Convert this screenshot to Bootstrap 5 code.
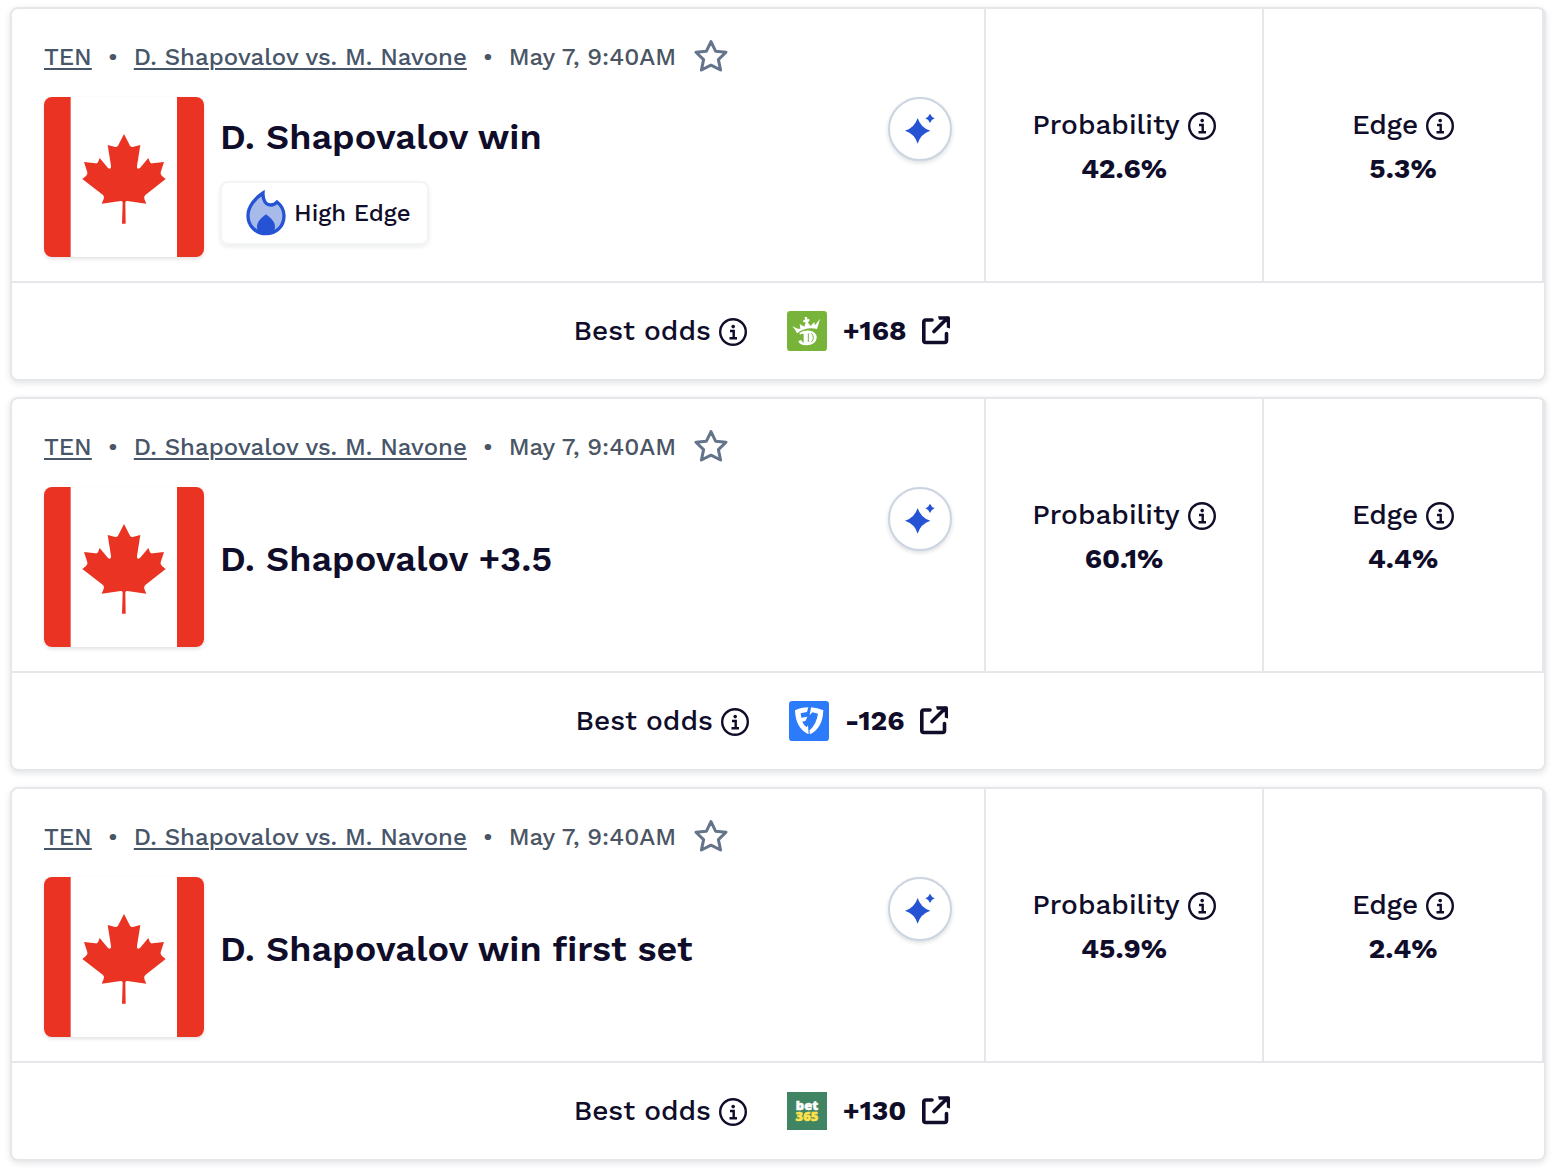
<!DOCTYPE html>
<html lang="en">
<head>
<meta charset="utf-8">
<meta name="viewport" content="width=device-width, initial-scale=1">
<title>Tennis picks</title>
<link href="https://cdn.jsdelivr.net/npm/bootstrap@5.3.0/dist/css/bootstrap.min.css" rel="stylesheet">
<style>
  body { font-family: "Work Sans", Inter, "Liberation Sans", sans-serif; color: #0f0d29; background: #fff; font-weight: 500; }
  .picks { padding: 7px 6px 7px 10px; gap: 16px; }
  .pick { --bs-card-border-color: #e5e7eb; --bs-card-border-width: 2px; --bs-card-border-radius: 8px; --bs-card-color: #0f0d29; box-shadow: 0 2px 6px rgba(15, 23, 42, .12); }
  .pick-main { padding: 24px 32px; min-width: 0; }
  .meta { height: 48px; margin-bottom: 16px; font-size: 24px; line-height: 48px; color: #4b5563; white-space: nowrap; }
  .meta a { color: #475569; text-decoration-thickness: 2px; text-underline-offset: 3px; }
  .dot { width: 42px; text-align: center; }
  .star { margin-left: 18px; margin-bottom: 2px; }
  .plain { padding: 0; border: 0; background: none; color: inherit; display: inline-flex; }
  .star.plain { color: #64748b; }
  .flag { border-radius: 8px; overflow: hidden; box-shadow: 0 2px 4px rgba(0, 0, 0, .12); }
  .pick-text { padding-bottom: 12px; }
  .pick-title { font-size: 36px; line-height: 48px; font-weight: 600; padding-bottom: 4px; }
  .edge-tag { height: 64px; padding: 0 16px 0 24px; gap: 8px; border: 2px solid #f3f4f6; border-radius: 8px; font-size: 24px; box-shadow: 0 2px 4px rgba(15, 23, 42, .08); }
  .insight { width: 64px; height: 64px; border: 2px solid #cbd5e1; border-radius: 50%; background: #fff; box-shadow: 0 2px 4px rgba(15, 23, 42, .14); }
  .stat { flex: 0 0 278px; padding-top: 4px; border-left: 2px solid #e5e7eb; font-size: 28px; line-height: 44px; }
  .stat:last-child { flex-basis: 282px; border-right: 2px solid #e5e7eb; }
  .stat strong, .odds { font-weight: 700; }
  .label-row { gap: 8px; }
  .label-row .plain { padding-top: 2px; }
  .pick-foot { height: 98px; padding-right: 32px; gap: 40px; border-top: 2px solid #e5e7eb; font-size: 28px; line-height: 44px; }
  .odds { gap: 16px; color: inherit; }
  .brand-word { font-family: "Open Sans", sans-serif; font-weight: 800; font-size: 13px; text-anchor: middle; stroke: currentColor; stroke-width: .5px; fill: currentColor; }
  .brand-white { color: #fff; }
  .brand-yellow { color: #ffe14a; }
</style>
<script src="https://cdn.jsdelivr.net/npm/bootstrap@5.3.0/dist/js/bootstrap.bundle.min.js"></script>
</head>
<body>
<svg width="0" height="0" class="position-absolute" aria-hidden="true">
  <symbol id="i-star" viewBox="0 0 34 34"><path d="M17 2.6 21.7 12.3 32 13.2 24.4 20.6 26.6 31 17 26.2 7.400 31 9.600 20.600 2 13.200 12.300 12.300Z" fill="none" stroke="currentColor" stroke-width="3" stroke-linejoin="round"/></symbol>
  <symbol id="i-info" viewBox="0 0 28 28"><circle cx="14" cy="14" r="12.8" fill="none" stroke="currentColor" stroke-width="2.400"/><circle cx="14.200" cy="8.600" r="1.800" fill="currentColor"/><path d="M11 13H14.700V20M10.500 20.200H18" fill="none" stroke="currentColor" stroke-width="2.400"/></symbol>
  <symbol id="i-ext" viewBox="1.500 0 28 30"><path d="M11.500 4H5.300Q3.300 4 3.300 6V24.500Q3.300 26.500 5.300 26.500H24Q26 26.500 26 24.500V17.500" fill="none" stroke="currentColor" stroke-width="3.600" stroke-linecap="round"/><path d="M13.500 15.500 26.500 2.500" stroke="currentColor" stroke-width="3.600" stroke-linecap="round"/><path d="M17.500 .3H28Q29.500 .3 29.500 2V12.500L26.300 11.500V6.500L23.500 3.700H18.500Z" fill="currentColor"/></symbol>
  <symbol id="i-spark" viewBox="30 27 180 180"><path d="M113 84Q122 113 151 122.500 122 132 113 161 104 132 75 122.500 104 113 113 84ZM150 71Q154 81 164 85 154 89 150 99 146 89 136 85 146 81 150 71Z" fill="#2553d4"/></symbol>
  <symbol id="i-flame" viewBox="78 44 120 138"><path d="M129 53C128 78 139 89 152 89 161 89 167 85 171 80 185 91 192 106 192 121 192 154 168 175 138 175 108 175 84 152 84 121 84 94 106 68 129 53Z" fill="#a8baea" stroke="#2553d4" stroke-width="10"/><path d="M138 117C154 130 165 140 165 154Q165 163 161 170 138 182 115 170 111 163 111 154C111 140 122 130 138 117Z" fill="#2553d4"/></symbol>
  <symbol id="i-canada" viewBox="0 0 480 480"><path d="M0 0H480V480H0Z" fill="#fff"/><path d="M0 0H80V480H0ZM399 0H480V480H399Z" fill="#ea3323"/><path d="M240 111 222 146Q218 152 211 149L191 144 201 207Q202 219 192 213L167 183 162 196Q160 200 154 199L120 195 130 226Q132 233 126 237L115 246 177 294Q182 299 179 306L173 320 230 312Q236 311 236 317L234 380H245L244 317Q244 311 250 312L307 320 301 306Q299 299 304 294L365 246 354 237Q348 233 350 226L360 195 326 199Q320 200 318 196L313 183 288 213Q277 219 279 207L289 144 269 149Q262 152 258 146Z" fill="#ea3323"/></symbol>
</svg>

<main class="picks d-flex flex-column">

  <article class="card pick">
    <div class="d-flex">
      <div class="pick-main flex-fill">
        <div class="meta d-flex align-items-center">
          <a href="#ten">TEN</a><span class="dot">•</span><a href="#match">D. Shapovalov vs. M. Navone</a><span class="dot">•</span><span>May 7, 9:40AM</span>
          <button type="button" class="plain star" aria-label="Save pick"><svg width="34" height="34"><use href="#i-star"/></svg></button>
        </div>
        <div class="d-flex gap-3">
          <svg class="flag flex-shrink-0" width="160" height="160" role="img" aria-label="Canada"><use href="#i-canada"/></svg>
          <div class="pick-text d-flex flex-column flex-fill align-items-start">
            <div class="flex-fill d-flex align-items-center"><h2 class="pick-title m-0">D. Shapovalov win</h2></div>
            <div class="edge-tag d-flex align-items-center"><svg width="40" height="46"><use href="#i-flame"/></svg><span>High Edge</span></div>
          </div>
          <button type="button" class="insight plain flex-shrink-0" aria-label="Insights"><svg width="60" height="60"><use href="#i-spark"/></svg></button>
        </div>
      </div>
      <div class="stat d-flex flex-column align-items-center justify-content-center">
        <div class="label-row d-flex align-items-center"><span>Probability</span><button type="button" class="plain" aria-label="About probability"><svg width="28" height="28"><use href="#i-info"/></svg></button></div>
        <strong>42.6%</strong>
      </div>
      <div class="stat d-flex flex-column align-items-center justify-content-center">
        <div class="label-row d-flex align-items-center"><span>Edge</span><button type="button" class="plain" aria-label="About edge"><svg width="28" height="28"><use href="#i-info"/></svg></button></div>
        <strong>5.3%</strong>
      </div>
    </div>
    <div class="pick-foot d-flex align-items-center justify-content-center">
      <div class="label-row d-flex align-items-center"><span>Best odds</span><button type="button" class="plain" aria-label="About best odds"><svg width="28" height="28"><use href="#i-info"/></svg></button></div>
      <a href="#draftkings" class="odds d-flex align-items-center text-decoration-none">
        <svg width="40" height="40" viewBox="0 0 120 120" role="img" aria-label="DraftKings"><rect width="120" height="120" rx="10" fill="#79b43a"/><path d="M30 67 25 57 16 46 32 53 40 53 38 39 52 47 56 35 48 32 50 26 54 27 53 18H60L61 25 67 24V31L62 34 71 45 82 33 84 43 99 23 95 38 90 54Q58 46 30 67Z" fill="#fff"/><path d="M37 66Q50 57 70 59 90 64 89 81 87 102 58 103 38 103 34 90L43 87Q45 93 50 95V69Q43 67 39 71Z" fill="#fff"/><path d="M64 67V93M73 67Q79 72 79 80 79 88 73 93" stroke="#79b43a" stroke-width="3" fill="none"/></svg>
        <span>+168</span>
        <svg width="28" height="30"><use href="#i-ext"/></svg>
      </a>
    </div>
  </article>

  <article class="card pick">
    <div class="d-flex">
      <div class="pick-main flex-fill">
        <div class="meta d-flex align-items-center">
          <a href="#ten">TEN</a><span class="dot">•</span><a href="#match">D. Shapovalov vs. M. Navone</a><span class="dot">•</span><span>May 7, 9:40AM</span>
          <button type="button" class="plain star" aria-label="Save pick"><svg width="34" height="34"><use href="#i-star"/></svg></button>
        </div>
        <div class="d-flex gap-3">
          <svg class="flag flex-shrink-0" width="160" height="160" role="img" aria-label="Canada"><use href="#i-canada"/></svg>
          <div class="pick-text d-flex flex-column flex-fill align-items-start">
            <div class="flex-fill d-flex align-items-center"><h2 class="pick-title m-0">D. Shapovalov +3.5</h2></div>
          </div>
          <button type="button" class="insight plain flex-shrink-0" aria-label="Insights"><svg width="60" height="60"><use href="#i-spark"/></svg></button>
        </div>
      </div>
      <div class="stat d-flex flex-column align-items-center justify-content-center">
        <div class="label-row d-flex align-items-center"><span>Probability</span><button type="button" class="plain" aria-label="About probability"><svg width="28" height="28"><use href="#i-info"/></svg></button></div>
        <strong>60.1%</strong>
      </div>
      <div class="stat d-flex flex-column align-items-center justify-content-center">
        <div class="label-row d-flex align-items-center"><span>Edge</span><button type="button" class="plain" aria-label="About edge"><svg width="28" height="28"><use href="#i-info"/></svg></button></div>
        <strong>4.4%</strong>
      </div>
    </div>
    <div class="pick-foot d-flex align-items-center justify-content-center">
      <div class="label-row d-flex align-items-center"><span>Best odds</span><button type="button" class="plain" aria-label="About best odds"><svg width="28" height="28"><use href="#i-info"/></svg></button></div>
      <a href="#fanduel" class="odds d-flex align-items-center text-decoration-none">
        <svg width="40" height="40" viewBox="27 33 120 120" role="img" aria-label="FanDuel"><rect x="27" y="33" width="120" height="120" rx="10" fill="#2b7bfa"/><path d="M45 61Q62 52 85 52L81 66 62 70 64 83 82 80 77 92 67 95Q71 105 80 112L84 106 86 133Q66 124 56 106 46 88 45 61ZM93 52Q112 53 130 61 129 88 119 106 109 124 90 133L88 122Q99 112 106 98 112 84 114 71L97 67 89 76Z" fill="#fff"/></svg>
        <span>-126</span>
        <svg width="28" height="30"><use href="#i-ext"/></svg>
      </a>
    </div>
  </article>

  <article class="card pick">
    <div class="d-flex">
      <div class="pick-main flex-fill">
        <div class="meta d-flex align-items-center">
          <a href="#ten">TEN</a><span class="dot">•</span><a href="#match">D. Shapovalov vs. M. Navone</a><span class="dot">•</span><span>May 7, 9:40AM</span>
          <button type="button" class="plain star" aria-label="Save pick"><svg width="34" height="34"><use href="#i-star"/></svg></button>
        </div>
        <div class="d-flex gap-3">
          <svg class="flag flex-shrink-0" width="160" height="160" role="img" aria-label="Canada"><use href="#i-canada"/></svg>
          <div class="pick-text d-flex flex-column flex-fill align-items-start">
            <div class="flex-fill d-flex align-items-center"><h2 class="pick-title m-0">D. Shapovalov win first set</h2></div>
          </div>
          <button type="button" class="insight plain flex-shrink-0" aria-label="Insights"><svg width="60" height="60"><use href="#i-spark"/></svg></button>
        </div>
      </div>
      <div class="stat d-flex flex-column align-items-center justify-content-center">
        <div class="label-row d-flex align-items-center"><span>Probability</span><button type="button" class="plain" aria-label="About probability"><svg width="28" height="28"><use href="#i-info"/></svg></button></div>
        <strong>45.9%</strong>
      </div>
      <div class="stat d-flex flex-column align-items-center justify-content-center">
        <div class="label-row d-flex align-items-center"><span>Edge</span><button type="button" class="plain" aria-label="About edge"><svg width="28" height="28"><use href="#i-info"/></svg></button></div>
        <strong>2.4%</strong>
      </div>
    </div>
    <div class="pick-foot d-flex align-items-center justify-content-center">
      <div class="label-row d-flex align-items-center"><span>Best odds</span><button type="button" class="plain" aria-label="About best odds"><svg width="28" height="28"><use href="#i-info"/></svg></button></div>
      <a href="#bet365" class="odds d-flex align-items-center text-decoration-none">
        <svg width="40" height="38" viewBox="0 0 40 38" role="img" aria-label="bet365"><rect width="40" height="38" fill="#3f8463"/><text class="brand-word brand-white" x="20" y="18">bet</text><text class="brand-word brand-yellow" x="20" y="29">365</text></svg>
        <span>+130</span>
        <svg width="28" height="30"><use href="#i-ext"/></svg>
      </a>
    </div>
  </article>

</main>
</body>
</html>
